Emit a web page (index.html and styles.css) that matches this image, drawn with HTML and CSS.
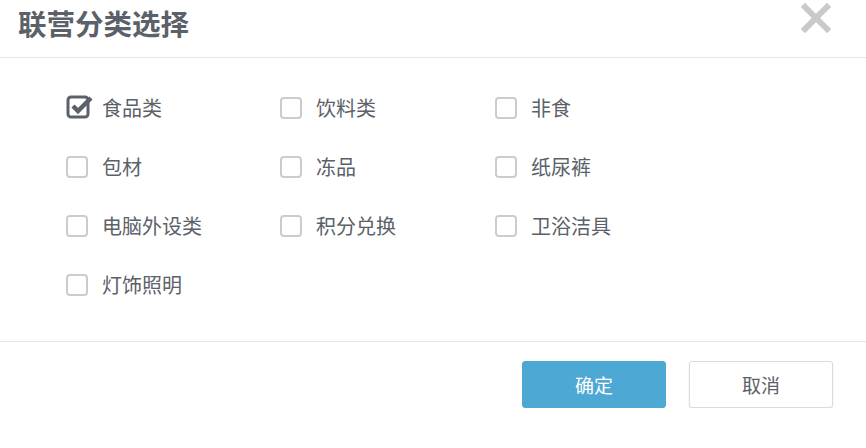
FILE: index.html
```html
<!DOCTYPE html>
<html lang="zh">
<head>
  <meta charset="UTF-8">
  <title>联营分类选择</title>
  <link rel="stylesheet" href="styles.css">
</head>
<body>
  <div class="dialogo">
    <div class="cabecera">
      <h2>联营分类选择</h2>
      <span class="cerrar">
        <svg width="30" height="30" viewBox="0 0 30 30">
          <path d="M4 4 L26 26 M26 4 L4 26" stroke="#c9c9c9" stroke-width="6" stroke-linecap="square"/>
        </svg>
      </span>
    </div>

    <div class="cuerpo">
      <label class="opcion marcada">
        <span class="caja">
          <svg width="28" height="28" viewBox="0 0 28 28">
            <rect x="2" y="4" width="20" height="20" rx="3" fill="none" stroke="#5b6168" stroke-width="3"/>
            <path d="M7 13 L12 18 L25 5" fill="none" stroke="#5b6168" stroke-width="4.5" stroke-linejoin="miter"/>
          </svg>
        </span>
        食品类
      </label>
      <label class="opcion"><span class="caja"></span>饮料类</label>
      <label class="opcion"><span class="caja"></span>非食</label>
      <label class="opcion"><span class="caja"></span>包材</label>
      <label class="opcion"><span class="caja"></span>冻品</label>
      <label class="opcion"><span class="caja"></span>纸尿裤</label>
      <label class="opcion"><span class="caja"></span>电脑外设类</label>
      <label class="opcion"><span class="caja"></span>积分兑换</label>
      <label class="opcion"><span class="caja"></span>卫浴洁具</label>
      <label class="opcion"><span class="caja"></span>灯饰照明</label>
    </div>

    <div class="pie">
      <button class="btn primario">确定</button>
      <button class="btn">取消</button>
    </div>
  </div>
</body>
</html>
```

FILE: styles.css
```css
body {
  margin: 0;
  background: #fff;
  font-family: "Noto Sans CJK SC", "Noto Sans", sans-serif;
  color: #5b6168;
}

.dialogo {
  width: 866px;
}

.cabecera {
  height: 57px;
  border-bottom: 1px solid #e6e6e6;
  display: flex;
  align-items: center;
  justify-content: space-between;
  padding: 0 33px 0 18px;
}

.cabecera h2 {
  margin: 0;
  font-size: 28.5px;
  font-weight: bold;
  color: #5b6168;
  margin-top: -12px;
}

.cerrar {
  display: flex;
  margin-top: -22px;
  margin-right: 2px;
}

.cuerpo {
  display: grid;
  grid-template-columns: 214px 215px 215px;
  grid-auto-rows: 59px;
  padding: 20px 0 27px 66px;
  border-bottom: 1px solid #e6e6e6;
}

.opcion {
  display: flex;
  align-items: center;
  font-size: 20px;
  color: #5b6168;
  cursor: pointer;
}

.caja {
  width: 18px;
  height: 18px;
  border: 2px solid #cccccc;
  border-radius: 4px;
  margin-right: 14px;
  position: relative;
}

.marcada .caja {
  border-color: transparent;
}

.marcada .caja svg {
  position: absolute;
  left: -2px;
  top: -6px;
}

.pie {
  display: flex;
  justify-content: flex-end;
  gap: 23px;
  padding: 19px 33px 0 0;
}

.btn {
  width: 144px;
  height: 47px;
  font-family: inherit;
  font-size: 19px;
  color: #5b6168;
  background: #fff;
  border: 1px solid #dadada;
  border-radius: 3px;
  box-shadow: 0 1px 2px rgba(0,0,0,0.1);
  cursor: pointer;
}

.btn.primario {
  background: #4ea8d4;
  border-color: #4ea8d4;
  color: #fff;
  box-shadow: none;
}
```
